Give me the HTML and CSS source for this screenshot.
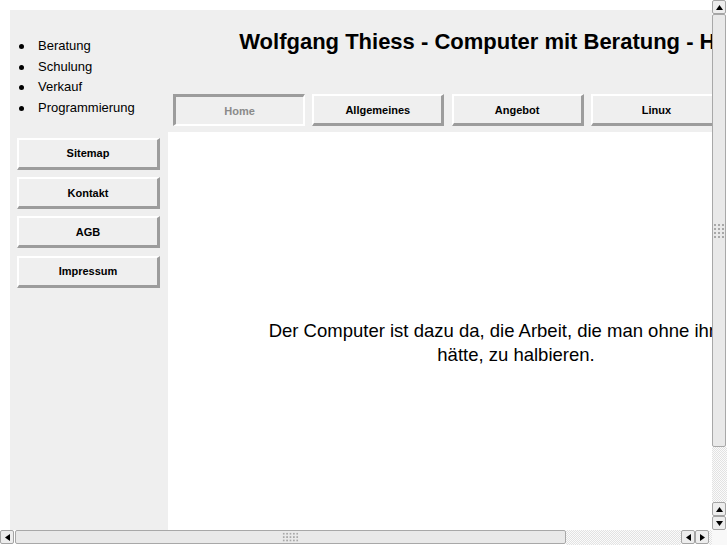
FILE: index.html
```html
<!DOCTYPE html>
<html lang="de">
<head>
<meta charset="utf-8">
<title>Wolfgang Thiess - Computer mit Beratung - Home</title>
<link rel="stylesheet" href="styles.css">
</head>
<body>
<div class="window">
  <div class="viewport">
    <div class="page">
      <aside class="sidebar">
        <ul class="topics">
          <li>Beratung</li>
          <li>Schulung</li>
          <li>Verkauf</li>
          <li>Programmierung</li>
        </ul>
        <nav class="sidenav">
          <a class="btn">Sitemap</a>
          <a class="btn">Kontakt</a>
          <a class="btn">AGB</a>
          <a class="btn">Impressum</a>
        </nav>
      </aside>
      <div class="main">
        <header class="header">
          <h1 class="title">Wolfgang Thiess - Computer mit Beratung - Home</h1>
          <nav class="topnav">
            <a class="btn btn-active">Home</a>
            <a class="btn">Allgemeines</a>
            <a class="btn">Angebot</a>
            <a class="btn">Linux</a>
          </nav>
        </header>
        <section class="content">
          <p class="quote">Der Computer ist dazu da, die Arbeit, die man ohne ihn nicht<br>hätte, zu halbieren.</p>
        </section>
      </div>
    </div>
  </div>

  <div class="vscroll">
    <div class="sb-btn"><svg width="7" height="5" viewBox="0 0 7 5"><polygon points="3.5,0 7,5 0,5"/></svg></div>
    <div class="thumb thumb-v"><span class="grip grip-v"></span></div>
    <div class="track"></div>
    <div class="sb-btn"><svg width="7" height="5" viewBox="0 0 7 5"><polygon points="3.5,0 7,5 0,5"/></svg></div>
    <div class="sb-btn"><svg width="7" height="5" viewBox="0 0 7 5"><polygon points="0,0 7,0 3.5,5"/></svg></div>
  </div>

  <div class="hscroll">
    <div class="sb-btn"><svg width="5" height="7" viewBox="0 0 5 7"><polygon points="0,3.5 5,0 5,7"/></svg></div>
    <div class="thumb thumb-h"><span class="grip grip-h"></span></div>
    <div class="track"></div>
    <div class="sb-btn"><svg width="5" height="7" viewBox="0 0 5 7"><polygon points="0,3.5 5,0 5,7"/></svg></div>
    <div class="sb-btn"><svg width="5" height="7" viewBox="0 0 5 7"><polygon points="0,0 5,3.5 0,7"/></svg></div>
    <div class="track track-end"></div>
  </div>

  <div class="corner"></div>
</div>
</body>
</html>
```

FILE: styles.css
```css
html, body {
  margin: 0;
  padding: 0;
  overflow: hidden;
  background: #ffffff;
}

body {
  font-family: "Liberation Sans", Arial, Helvetica, sans-serif;
  color: #000;
}

.window {
  width: 727px;
  height: 545px;
  display: grid;
  grid-template-columns: 712px 15px;
  grid-template-rows: 530px 15px;
}

.viewport {
  overflow: hidden;
  background: #ffffff;
}

.page {
  margin: 10px 0 0 10px;
  width: 844px;
  height: 600px;
  display: flex;
}

/* ---------- left column ---------- */
.sidebar {
  width: 158px;
  flex: none;
  background: #efefef;
}

.topics {
  list-style: none;
  margin: 0;
  padding: 26px 0 0 0;
  font-size: 13px;
  line-height: 20.7px;
}

.topics li {
  display: flex;
  align-items: center;
}

.topics li::before {
  content: "";
  width: 5px;
  height: 5px;
  border-radius: 50%;
  background: #000;
  margin: 0 14px 0 9px;
  flex: none;
}

.sidenav {
  margin-top: 19px;
  padding: 0 8px 0 7px;
  display: flex;
  flex-direction: column;
  gap: 7.3px;
}

/* ---------- buttons ---------- */
.btn {
  box-sizing: border-box;
  height: 32px;
  display: flex;
  align-items: center;
  justify-content: center;
  background: #efefef;
  border-style: solid;
  border-width: 2px 3px 3px 2px;
  border-color: #ffffff #9c9c9c #9c9c9c #ffffff;
  font-size: 11px;
  font-weight: bold;
  color: #000;
  text-decoration: none;
}

.btn-active {
  border-width: 3px 2px 2px 3px;
  border-color: #9c9c9c #ffffff #ffffff #9c9c9c;
  color: #8a8a8a;
}

/* ---------- main column ---------- */
.main {
  flex: 1;
  display: flex;
  flex-direction: column;
}

.header {
  background: #efefef;
  padding: 19px 0 6px 0;
}

.title {
  margin: 0;
  padding-right: 22px;
  font-size: 22px;
  line-height: 26px;
  font-weight: bold;
  text-align: center;
  white-space: nowrap;
}

.topnav {
  margin-top: 39px;
  padding-left: 5px;
  display: flex;
  gap: 7.3px;
}

.topnav .btn {
  width: 132px;
  flex: none;
}

.content {
  flex: 1;
  background: #ffffff;
}

.quote {
  margin: 0;
  padding: 187px 0 0 10px;
  font-size: 18.5px;
  line-height: 24px;
  text-align: center;
  white-space: nowrap;
}

/* ---------- scrollbars ---------- */
.vscroll {
  display: flex;
  flex-direction: column;
}

.hscroll {
  display: flex;
}

.track {
  flex: 1;
  background: repeating-conic-gradient(#e2e2e2 0 25%, #fbfbfb 0 50%) 0 0 / 2px 2px;
}

.track-end {
  flex: none;
  width: 3px;
}

.sb-btn {
  box-sizing: border-box;
  width: 14px;
  height: 14px;
  flex: none;
  display: flex;
  align-items: center;
  justify-content: center;
  background: #ededed;
  border: 1px solid #a4a4a4;
  border-radius: 2px;
}

.sb-btn svg {
  display: block;
  fill: #000;
}

.thumb {
  box-sizing: border-box;
  flex: none;
  background: #e9e9e9;
  border: 1px solid #a8a8a8;
  border-radius: 2px;
  display: flex;
  align-items: center;
  justify-content: center;
}

.thumb-v {
  width: 14px;
  height: 433px;
}

.thumb-h {
  width: 551px;
  height: 14px;
  margin-left: 1px;
}

.grip {
  display: block;
  background-image: radial-gradient(circle, #a8a8a8 0.8px, transparent 1.1px);
}

.grip-v {
  width: 12px;
  height: 16px;
  background-size: 4px 4px;
}

.grip-h {
  width: 17px;
  height: 10px;
  background-size: 3.4px 3.4px;
}

.corner {
  background: #f8f8f8;
}
```
